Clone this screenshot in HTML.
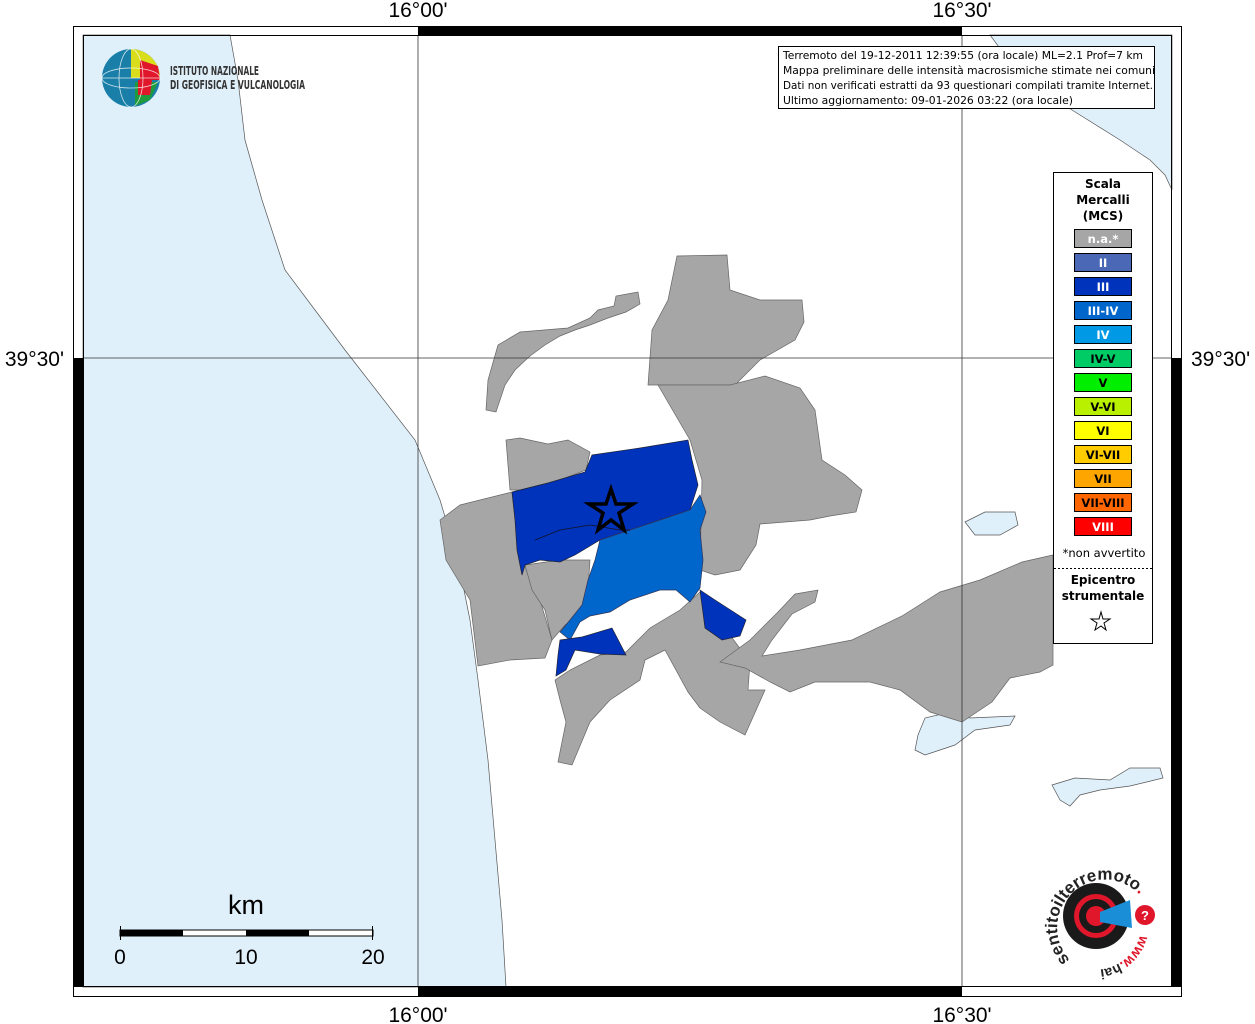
<!DOCTYPE html>
<html><head><meta charset="utf-8"><style>
html,body{margin:0;padding:0;background:#fff;}
body{width:1255px;height:1024px;position:relative;overflow:hidden;font-family:"Liberation Sans",sans-serif;}
</style></head><body>
<svg width="1255" height="1024" viewBox="0 0 1255 1024" xmlns="http://www.w3.org/2000/svg" style="position:absolute;left:0;top:0">
<rect x="83" y="35" width="1089" height="952" fill="#fff"/>
<!-- sea -->
<path d="M83,35 L230,35 L238,80 L245,140 L262,200 L285,270 L315,310 L345,350 L380,395 L415,440 L440,500 L458,560 L470,620 L478,680 L488,760 L495,840 L502,920 L506,987 L83,987 Z" fill="#dff0fb" stroke="#555" stroke-width="0.7"/>
<path d="M990,35 L1172,35 L1172,190 L1165,175 L1150,160 L1120,140 L1080,115 L1040,90 L1010,62 Z" fill="#dff0fb" stroke="#555" stroke-width="0.7"/>
<path d="M918,735 L925,718 L950,712 L970,718 L1015,716 L1010,725 L975,730 L955,745 L925,755 L915,750 Z" fill="#dff0fb" stroke="#555" stroke-width="0.7"/>
<path d="M1052,785 L1075,778 L1110,780 L1130,768 L1160,768 L1163,778 L1130,786 L1100,790 L1080,795 L1070,806 L1060,800 Z" fill="#dff0fb" stroke="#555" stroke-width="0.7"/>
<path d="M965,522 L985,512 L1015,512 L1018,525 L1000,535 L975,535 Z" fill="#dff0fb" stroke="#555" stroke-width="0.7"/>
<!-- gray regions -->
<g fill="#a6a6a6" stroke="#666" stroke-width="0.7">
<path d="M486,410 L488,380 L498,345 L520,332 L568,328 L590,318 L598,310 L614,306 L616,296 L638,292 L640,304 L626,312 L608,318 L590,325 L575,330 L560,336 L545,345 L530,356 L515,370 L505,385 L496,412 Z"/>
<path d="M648,385 L652,330 L668,300 L677,256 L727,255 L730,290 L760,300 L802,300 L804,322 L795,340 L760,360 L735,385 Z"/>
<path d="M658,385 L730,385 L765,376 L800,388 L815,410 L822,460 L845,475 L862,490 L856,512 L830,516 L810,520 L760,524 L756,545 L740,570 L715,575 L700,570 L702,480 L690,440 Z"/>
<path d="M506,440 L520,438 L548,444 L568,440 L590,452 L586,470 L560,480 L520,490 L510,490 Z"/>
<path d="M440,520 L460,505 L512,492 L518,545 L528,575 L540,600 L552,640 L545,658 L510,660 L478,666 L470,600 L446,560 Z"/>
<path d="M525,565 L560,560 L590,560 L588,590 L580,615 L565,625 L552,640 L545,610 L532,590 Z"/>
<path d="M555,680 L570,670 L600,655 L626,652 L650,628 L680,610 L700,592 L712,610 L730,635 L750,662 L748,690 L765,690 L745,735 L720,722 L700,708 L688,692 L665,650 L645,660 L640,680 L610,700 L590,722 L572,765 L558,762 L566,722 L560,700 Z"/>
<path d="M720,662 L750,640 L778,612 L795,594 L818,590 L815,602 L792,614 L772,640 L762,656 L800,650 L852,640 L902,616 L940,592 L980,580 L1022,562 L1053,555 L1053,665 L1040,672 L1010,678 L992,702 L962,722 L930,712 L900,690 L870,682 L815,682 L790,692 L770,682 L745,668 Z"/>
</g>
<!-- blue -->
<path d="M512,492 L548,483 L585,472 L592,455 L640,448 L688,440 L692,460 L698,485 L690,510 L660,520 L630,530 L600,540 L575,555 L560,562 L540,560 L525,565 L522,575 L517,550 L515,520 Z" fill="#0033bb" stroke="#223" stroke-width="0.7"/>
<path d="M690,510 L700,495 L706,512 L700,530 L703,560 L700,588 L690,602 L676,590 L660,590 L630,600 L610,612 L590,616 L580,622 L570,640 L560,632 L570,620 L582,605 L588,580 L595,560 L600,540 L630,530 L660,520 Z" fill="#0066cc" stroke="#335" stroke-width="0.7"/>
<path d="M700,590 L715,600 L746,620 L740,636 L722,640 L705,628 Z" fill="#0033bb" stroke="#223" stroke-width="0.7"/>
<path d="M560,640 L582,637 L612,628 L626,655 L600,654 L575,650 L566,670 L556,676 L558,655 Z" fill="#0033bb" stroke="#223" stroke-width="0.7"/>
<path d="M535,540 L560,530 L590,525 L620,530 L630,530" fill="none" stroke="#112" stroke-width="0.7"/>
<!-- star -->
<polygon points="611,489 616,504 633,504 619,513 624,530 611,520 598,530 603,513 589,504 606,504" fill="#0033bb" stroke="#000" stroke-width="3.5"/>
<!-- grid -->
<line x1="418" y1="35" x2="418" y2="987" stroke="#333" stroke-width="0.8"/>
<line x1="962" y1="35" x2="962" y2="987" stroke="#333" stroke-width="0.8"/>
<line x1="83" y1="358" x2="1172" y2="358" stroke="#333" stroke-width="0.8"/>
<!-- frame -->
<rect x="73.5" y="26.5" width="1108" height="970" fill="none" stroke="#000" stroke-width="1"/>
<rect x="83.5" y="35.5" width="1088" height="951" fill="none" stroke="#000" stroke-width="1"/>
<rect x="418" y="26" width="544" height="9" fill="#000"/>
<rect x="418" y="987" width="544" height="10" fill="#000"/>
<rect x="73" y="358" width="10" height="629" fill="#000"/>
<rect x="1172" y="358" width="10" height="629" fill="#000"/>
<!-- axis labels -->
<g font-family="Liberation Sans, sans-serif" font-size="21" fill="#000">
<text x="418" y="17" text-anchor="middle">16°00'</text>
<text x="962" y="17" text-anchor="middle">16°30'</text>
<text x="418" y="1022" text-anchor="middle">16°00'</text>
<text x="962" y="1022" text-anchor="middle">16°30'</text>
<text x="64" y="366" text-anchor="end">39°30'</text>
<text x="1191" y="366">39°30'</text>
</g>
<!-- scale bar -->
<text x="246" y="914" font-size="27" text-anchor="middle">km</text>
<rect x="120" y="930" width="253" height="6" fill="#fff" stroke="#000" stroke-width="1"/>
<rect x="120" y="930" width="63" height="6" fill="#000"/>
<rect x="246" y="930" width="63" height="6" fill="#000"/>
<line x1="120.5" y1="926" x2="120.5" y2="940" stroke="#000"/>
<line x1="372.5" y1="926" x2="372.5" y2="940" stroke="#000"/>
<g font-size="21" text-anchor="middle"><text x="120" y="964">0</text><text x="246" y="964">10</text><text x="373" y="964">20</text></g>
<!-- INGV logo -->
<circle cx="131" cy="78" r="29" fill="#1a7fa8"/>
<path d="M131,49 A29,29 0 0 1 160,78 L131,78 Z" fill="#d9dd1c"/>
<path d="M140,60 L158,66 L160,80 L140,80 Z" fill="#e0162b"/>
<path d="M135,82 L158,82 L150,100 L135,106 Z" fill="#1f9a3c"/>
<path d="M138,80 L152,80 L150,95 L138,95 Z" fill="#e0162b"/>
<g stroke="#fff" stroke-width="0.8" fill="none" opacity="0.8"><ellipse cx="131" cy="78" rx="29" ry="10"/><ellipse cx="131" cy="78" rx="12" ry="29"/><line x1="102" y1="78" x2="160" y2="78"/></g>
<g font-family="DejaVu Sans Condensed, Liberation Sans, sans-serif" font-size="12" fill="#333" font-weight="bold">
<text x="170" y="75" textLength="89" lengthAdjust="spacingAndGlyphs">ISTITUTO NAZIONALE</text>
<text x="170" y="89" textLength="135" lengthAdjust="spacingAndGlyphs">DI GEOFISICA E VULCANOLOGIA</text>
</g>
<!-- info box -->
<rect x="778.5" y="46.5" width="376" height="62" fill="#fff" stroke="#000"/>
<g font-family="DejaVu Sans, sans-serif" font-size="10.6" fill="#000">
<text x="783" y="59" textLength="360" lengthAdjust="spacingAndGlyphs">Terremoto del 19-12-2011 12:39:55 (ora locale) ML=2.1 Prof=7 km</text>
<text x="783" y="74" textLength="372" lengthAdjust="spacingAndGlyphs">Mappa preliminare delle intensità macrosismiche stimate nei comuni</text>
<text x="783" y="89" textLength="370" lengthAdjust="spacingAndGlyphs">Dati non verificati estratti da 93 questionari compilati tramite Internet.</text>
<text x="783" y="104" textLength="290" lengthAdjust="spacingAndGlyphs">Ultimo aggiornamento: 09-01-2026 03:22 (ora locale)</text>
</g>
<!-- legend -->
<rect x="1053.5" y="172.5" width="99" height="471" fill="#fff" stroke="#000"/>
<g font-family="DejaVu Sans, sans-serif" font-size="12" font-weight="bold" text-anchor="middle">
<text x="1103" y="188">Scala</text><text x="1103" y="204">Mercalli</text><text x="1103" y="220">(MCS)</text>
</g>
<g stroke="#000" stroke-width="1">
<rect x="1074.5" y="229.5" width="57" height="18" fill="#a6a6a6"/>
<rect x="1074.5" y="253.5" width="57" height="18" fill="#4a68b5"/>
<rect x="1074.5" y="277.5" width="57" height="18" fill="#0033bb"/>
<rect x="1074.5" y="301.5" width="57" height="18" fill="#0066cc"/>
<rect x="1074.5" y="325.5" width="57" height="18" fill="#0099e6"/>
<rect x="1074.5" y="349.5" width="57" height="18" fill="#00cc66"/>
<rect x="1074.5" y="373.5" width="57" height="18" fill="#00ee00"/>
<rect x="1074.5" y="397.5" width="57" height="18" fill="#b8f000"/>
<rect x="1074.5" y="421.5" width="57" height="18" fill="#ffff00"/>
<rect x="1074.5" y="445.5" width="57" height="18" fill="#ffcc00"/>
<rect x="1074.5" y="469.5" width="57" height="18" fill="#ffa500"/>
<rect x="1074.5" y="493.5" width="57" height="18" fill="#ff6600"/>
<rect x="1074.5" y="517.5" width="57" height="18" fill="#ff0000"/>
</g>
<g font-family="DejaVu Sans, sans-serif" font-size="11.5" font-weight="bold" text-anchor="middle">
<text x="1103" y="243" fill="#fff">n.a.*</text>
<text x="1103" y="267" fill="#fff">II</text>
<text x="1103" y="291" fill="#fff">III</text>
<text x="1103" y="315" fill="#fff">III-IV</text>
<text x="1103" y="339" fill="#fff">IV</text>
<text x="1103" y="363" fill="#000">IV-V</text>
<text x="1103" y="387" fill="#000">V</text>
<text x="1103" y="411" fill="#000">V-VI</text>
<text x="1103" y="435" fill="#000">VI</text>
<text x="1103" y="459" fill="#000">VI-VII</text>
<text x="1103" y="483" fill="#000">VII</text>
<text x="1103" y="507" fill="#000">VII-VIII</text>
<text x="1103" y="531" fill="#fff">VIII</text>
</g>
<text x="1104" y="557" font-family="DejaVu Sans, sans-serif" font-size="11.5" text-anchor="middle">*non avvertito</text>
<line x1="1054" y1="568.5" x2="1152" y2="568.5" stroke="#000" stroke-dasharray="2,2"/>
<g font-family="DejaVu Sans, sans-serif" font-size="12" font-weight="bold" text-anchor="middle"><text x="1103" y="584">Epicentro</text><text x="1103" y="600">strumentale</text></g>
<polygon points="1101,612 1103,619 1110,619 1104,623 1106,630 1101,626 1095,630 1097,623 1091,619 1099,619" fill="#fff" stroke="#000" stroke-width="1"/>
<!-- haisentito logo -->
<circle cx="1096" cy="916" r="33" fill="#1a1a1a"/>
<circle cx="1096" cy="916" r="22" fill="#e0162b"/>
<circle cx="1096" cy="916" r="17" fill="#1a1a1a"/>
<circle cx="1096" cy="916" r="10" fill="#e0162b"/>
<path d="M1100,912 L1130,900 L1132,928 L1100,922 Z" fill="#1a8fd8"/>
<circle cx="1145" cy="915" r="10" fill="#e0162b"/>
<text x="1145" y="920" font-size="13" font-weight="bold" fill="#fff" text-anchor="middle">?</text>
<defs><path id="arc" d="M1070,960 A46,46 0 1 1 1140,895"/><path id="arc2" d="M1140,935 A46,46 0 0 1 1075,965"/></defs>
<text font-size="17" font-weight="bold" fill="#222"><textPath href="#arc">sentitoilterremoto<tspan fill="#e0162b">.it</tspan></textPath></text>
<text font-size="14" font-weight="bold" fill="#e0162b"><textPath href="#arc2">www.<tspan fill="#222">hai</tspan></textPath></text>
</svg>
</body></html>
